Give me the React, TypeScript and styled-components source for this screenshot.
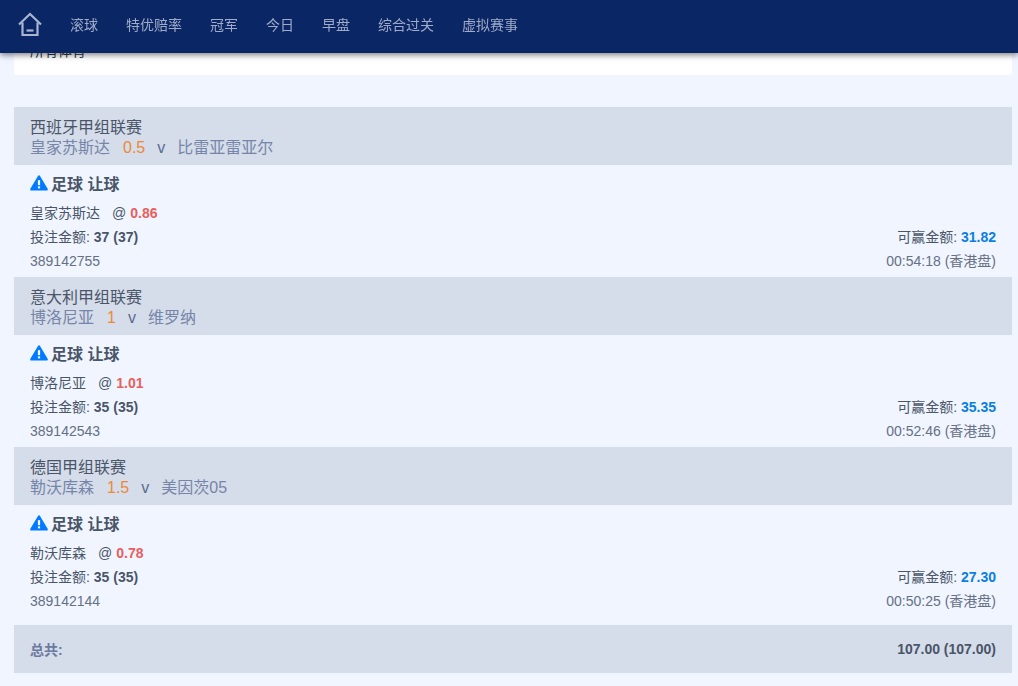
import styled, { createGlobalStyle } from 'styled-components'
import { FiChevronDown } from 'react-icons/fi'

const GlobalStyle = createGlobalStyle`
  html, body {
    margin: 0;
    padding: 0;
    background: #f0f5ff;
    font-family: "Liberation Sans", "Noto Sans CJK SC", sans-serif;
    color: #4a5568;
  }
`

const Header = styled.header`
  position: fixed;
  top: 0;
  left: 0;
  right: 0;
  height: 53px;
  padding: 0 0 5px 18px;
  box-sizing: border-box;
  z-index: 10;
  display: flex;
  align-items: center;
  background: #0b2665;
  box-shadow: 0 2px 6px rgba(0, 0, 0, 0.5);
`

const HomeLink = styled.a`
  display: flex;
  width: 24px;
  height: 24px;
  margin-right: 28px;
  color: #a9b5d1;
`

const Nav = styled.nav`
  display: flex;
  gap: 28px;
`

const NavItem = styled.a`
  font-size: 14px;
  color: #9fabc8;
`

const Page = styled.main`
  width: 998px;
  margin-left: 14px;
  padding-top: 30px;
`

const FilterCard = styled.div`
  display: flex;
  align-items: center;
  justify-content: space-between;
  height: 45px;
  padding: 0 16px 6px;
  margin-bottom: 32px;
  box-sizing: border-box;
  background: #fff;
  border-radius: 3px;
  font-size: 14px;
  color: #2d3748;
`

const GroupHeader = styled.div`
  height: 58px;
  padding: 11px 16px 0;
  box-sizing: border-box;
  background: #d5dcea;
  font-size: 16px;
  line-height: 20px;
`

const League = styled.div`
  color: #4a5568;
`

const Match = styled.div`
  display: flex;
  color: #7686a8;
`

const Handicap = styled.span`
  margin: 0 12px 0 13px;
  color: #ed8936;
`

const Versus = styled.span`
  margin-right: 12px;
  color: #5a6d90;
`

const Bet = styled.section`
  height: 112px;
  padding: 6px 16px 0;
  box-sizing: border-box;
`

const BetTitle = styled.div`
  display: flex;
  align-items: center;
  gap: 3px;
  height: 24px;
  font-size: 16px;
  font-weight: 700;
  color: #4a5568;
`

const WarnIcon = styled.svg`
  width: 18px;
  height: 16px;
`

const Selection = styled.div`
  margin-top: 6px;
  height: 24px;
  display: flex;
  align-items: center;
  font-size: 14px;
  line-height: 24px;
  color: #4a5568;
`

const At = styled.span`
  margin: 0 4px 0 12px;
`

const Odds = styled.strong`
  color: #e7605c;
`

const InfoRow = styled.div`
  display: flex;
  justify-content: space-between;
  align-items: center;
  height: 24px;
  font-size: 14px;
  line-height: 24px;
`

const Win = styled.strong`
  color: #0a7fe0;
`

const Muted = styled.span`
  font-size: 14px;
  color: #667085;
`

const TotalBar = styled.div`
  display: flex;
  justify-content: space-between;
  align-items: center;
  height: 48px;
  margin-top: 8px;
  padding: 0 16px;
  background: #d5dcea;
  font-size: 14px;
  font-weight: 700;
`

const TotalLabel = styled.span`
  color: #6b7a9e;
`

const bets = [
  { league: '西班牙甲组联赛', home: '皇家苏斯达', hc: '0.5', away: '比雷亚雷亚尔', odds: '0.86', stake: '37 (37)', win: '31.82', id: '389142755', time: '00:54:18' },
  { league: '意大利甲组联赛', home: '博洛尼亚', hc: '1', away: '维罗纳', odds: '1.01', stake: '35 (35)', win: '35.35', id: '389142543', time: '00:52:46' },
  { league: '德国甲组联赛', home: '勒沃库森', hc: '1.5', away: '美因茨05', odds: '0.78', stake: '35 (35)', win: '27.30', id: '389142144', time: '00:50:25' },
]

const navItems = ['滚球', '特优赔率', '冠军', '今日', '早盘', '综合过关', '虚拟赛事']

const App = () => {
  return (
    <>
      <GlobalStyle />
      <Header>
        <HomeLink>
          <svg viewBox="0 0 24 24" width="24" height="24" fill="none" stroke="currentColor" strokeWidth="2.2">
            <path d="M1 12.5 12 2l11 10.5" />
            <path d="M4.5 10.5V23h15V10.5" />
            <path d="M8.5 18.5h7" />
          </svg>
        </HomeLink>
        <Nav>
          {navItems.map((item) => (
            <NavItem key={item}>{item}</NavItem>
          ))}
        </Nav>
      </Header>
      <Page>
        <FilterCard>
          所有体育
          <FiChevronDown size={14} />
        </FilterCard>
        {bets.map((bet) => (
          <div key={bet.id}>
            <GroupHeader>
              <League>{bet.league}</League>
              <Match>
                {bet.home}
                <Handicap>{bet.hc}</Handicap>
                <Versus>v</Versus>
                {bet.away}
              </Match>
            </GroupHeader>
            <Bet>
              <BetTitle>
                <WarnIcon viewBox="0 0 18 16">
                  <path d="M9 1.6 16.6 14.4H1.4Z" fill="#007bff" stroke="#007bff" strokeWidth="2.4" strokeLinejoin="round" />
                  <path d="M9 5.2v5" stroke="#fff" strokeWidth="2.2" />
                  <path d="M9 11.4v2" stroke="#fff" strokeWidth="2.2" />
                </WarnIcon>
                足球 让球
              </BetTitle>
              <Selection>
                {bet.home}
                <At>@</At>
                <Odds>{bet.odds}</Odds>
              </Selection>
              <InfoRow>
                <span>投注金额: <strong>{bet.stake}</strong></span>
                <span>可赢金额: <Win>{bet.win}</Win></span>
              </InfoRow>
              <InfoRow>
                <Muted>{bet.id}</Muted>
                <Muted>{bet.time} (香港盘)</Muted>
              </InfoRow>
            </Bet>
          </div>
        ))}
        <TotalBar>
          <TotalLabel>总共:</TotalLabel>
          <span>107.00 (107.00)</span>
        </TotalBar>
      </Page>
    </>
  )
}

export default App
